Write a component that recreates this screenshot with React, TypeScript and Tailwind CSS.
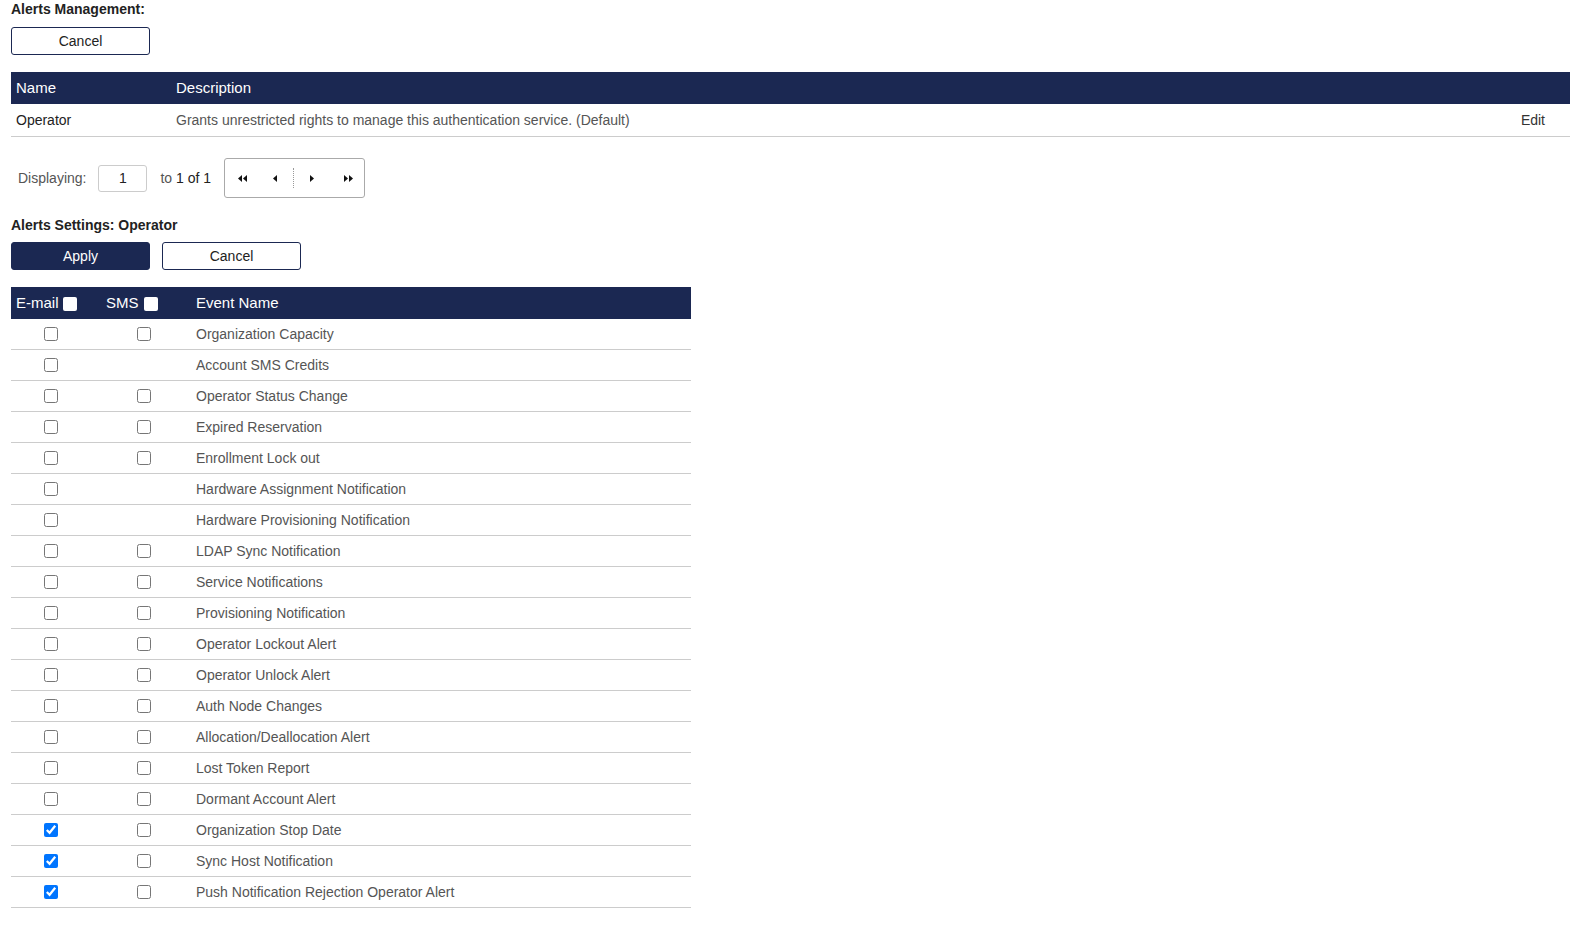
import React from 'react';

const events: { name: string; email: boolean; sms: boolean | null }[] = [
  { name: 'Organization Capacity', email: false, sms: false },
  { name: 'Account SMS Credits', email: false, sms: null },
  { name: 'Operator Status Change', email: false, sms: false },
  { name: 'Expired Reservation', email: false, sms: false },
  { name: 'Enrollment Lock out', email: false, sms: false },
  { name: 'Hardware Assignment Notification', email: false, sms: null },
  { name: 'Hardware Provisioning Notification', email: false, sms: null },
  { name: 'LDAP Sync Notification', email: false, sms: false },
  { name: 'Service Notifications', email: false, sms: false },
  { name: 'Provisioning Notification', email: false, sms: false },
  { name: 'Operator Lockout Alert', email: false, sms: false },
  { name: 'Operator Unlock Alert', email: false, sms: false },
  { name: 'Auth Node Changes', email: false, sms: false },
  { name: 'Allocation/Deallocation Alert', email: false, sms: false },
  { name: 'Lost Token Report', email: false, sms: false },
  { name: 'Dormant Account Alert', email: false, sms: false },
  { name: 'Organization Stop Date', email: true, sms: false },
  { name: 'Sync Host Notification', email: true, sms: false },
  { name: 'Push Notification Rejection Operator Alert', email: true, sms: false },
];

function Tri({ dir }: { dir: 'l' | 'r' }) {
  return (
    <svg width="4" height="7" viewBox="0 0 4 7" className="block">
      {dir === 'l' ? <path d="M4 0 L0 3.5 L4 7 Z" fill="#111" /> : <path d="M0 0 L4 3.5 L0 7 Z" fill="#111" />}
    </svg>
  );
}

function Box({ checked }: { checked: boolean }) {
  return <input type="checkbox" defaultChecked={checked} className="m-0 h-[14px] w-[14px] accent-[#0075ff]" />;
}

export default function App() {
  return (
    <div className="min-h-screen bg-white px-[11px] text-[14px] text-[#555] font-['Liberation_Sans',Arial,sans-serif]">
      <div className="pt-[1px] text-[14px] font-bold leading-[16px] text-[#222]">Alerts Management:</div>
      <button className="mt-[10px] h-[28px] w-[139px] rounded-[3px] border border-[#1b2852] bg-white text-[14px] text-[#222]">
        Cancel
      </button>

      {/* role table */}
      <div className="mt-[17px] mr-[-11px]">
        <div className="flex h-[32px] items-center bg-[#1b2852] text-[15px] text-white">
          <div className="w-[165px] pl-[5px]">Name</div>
          <div>Description</div>
        </div>
        <div className="flex h-[33px] items-center border-b border-[#ccc]">
          <div className="w-[165px] pl-[5px] text-[#222]">Operator</div>
          <div className="flex-1">Grants unrestricted rights to manage this authentication service. (Default)</div>
          <div className="pr-[25px] text-[#333]">Edit</div>
        </div>
      </div>

      {/* paging */}
      <div className="mt-[21px] flex h-[40px] items-center">
        <span className="ml-[7px]">Displaying:</span>
        <input
          defaultValue="1"
          className="ml-[12px] h-[27px] w-[49px] rounded-[3px] border border-[#ccc] text-center text-[14px] text-[#222] outline-none"
        />
        <span className="ml-[13px]">to <span className="text-[#222]">1 of 1</span></span>
        <div className="ml-[13px] flex h-[40px] w-[141px] items-center rounded-[3px] border border-[#aaa]">
          <div className="ml-[13px] flex gap-[1px]"><Tri dir="l" /><Tri dir="l" /></div>
          <div className="ml-[26px]"><Tri dir="l" /></div>
          <div className="ml-[16px] h-[20px] border-l border-dotted border-[#999]" />
          <div className="ml-[16px]"><Tri dir="r" /></div>
          <div className="ml-[30px] flex gap-[1px]"><Tri dir="r" /><Tri dir="r" /></div>
        </div>
      </div>

      <div className="mt-[19px] text-[14px] font-bold leading-[16px] text-[#222]">Alerts Settings: Operator</div>
      <div className="mt-[9px] flex gap-[12px]">
        <button className="h-[28px] w-[139px] rounded-[3px] border border-[#1b2852] bg-[#1b2852] text-[14px] text-white">
          Apply
        </button>
        <button className="h-[28px] w-[139px] rounded-[3px] border border-[#1b2852] bg-white text-[14px] text-[#222]">
          Cancel
        </button>
      </div>

      {/* events table */}
      <div className="mt-[17px] w-[680px]">
        <div className="flex h-[32px] items-center bg-[#1b2852] text-[15px] text-white">
          <div className="flex w-[90px] items-center pl-[5px]">
            E-mail
            <span className="ml-[4px] mt-[2px] inline-block h-[14px] w-[14px] rounded-[2px] bg-white" />
          </div>
          <div className="flex w-[90px] items-center pl-[5px]">
            SMS
            <span className="ml-[5px] mt-[2px] inline-block h-[14px] w-[14px] rounded-[2px] bg-white" />
          </div>
          <div className="pl-[5px]">Event Name</div>
        </div>
        {events.map((e) => (
          <div key={e.name} className="flex h-[31px] items-center border-b border-[#ccc]">
            <div className="flex w-[80px] justify-center"><Box checked={e.email} /></div>
            <div className="flex w-[105px] justify-center">{e.sms !== null && <Box checked={e.sms} />}</div>
            <div>{e.name}</div>
          </div>
        ))}
      </div>
    </div>
  );
}
